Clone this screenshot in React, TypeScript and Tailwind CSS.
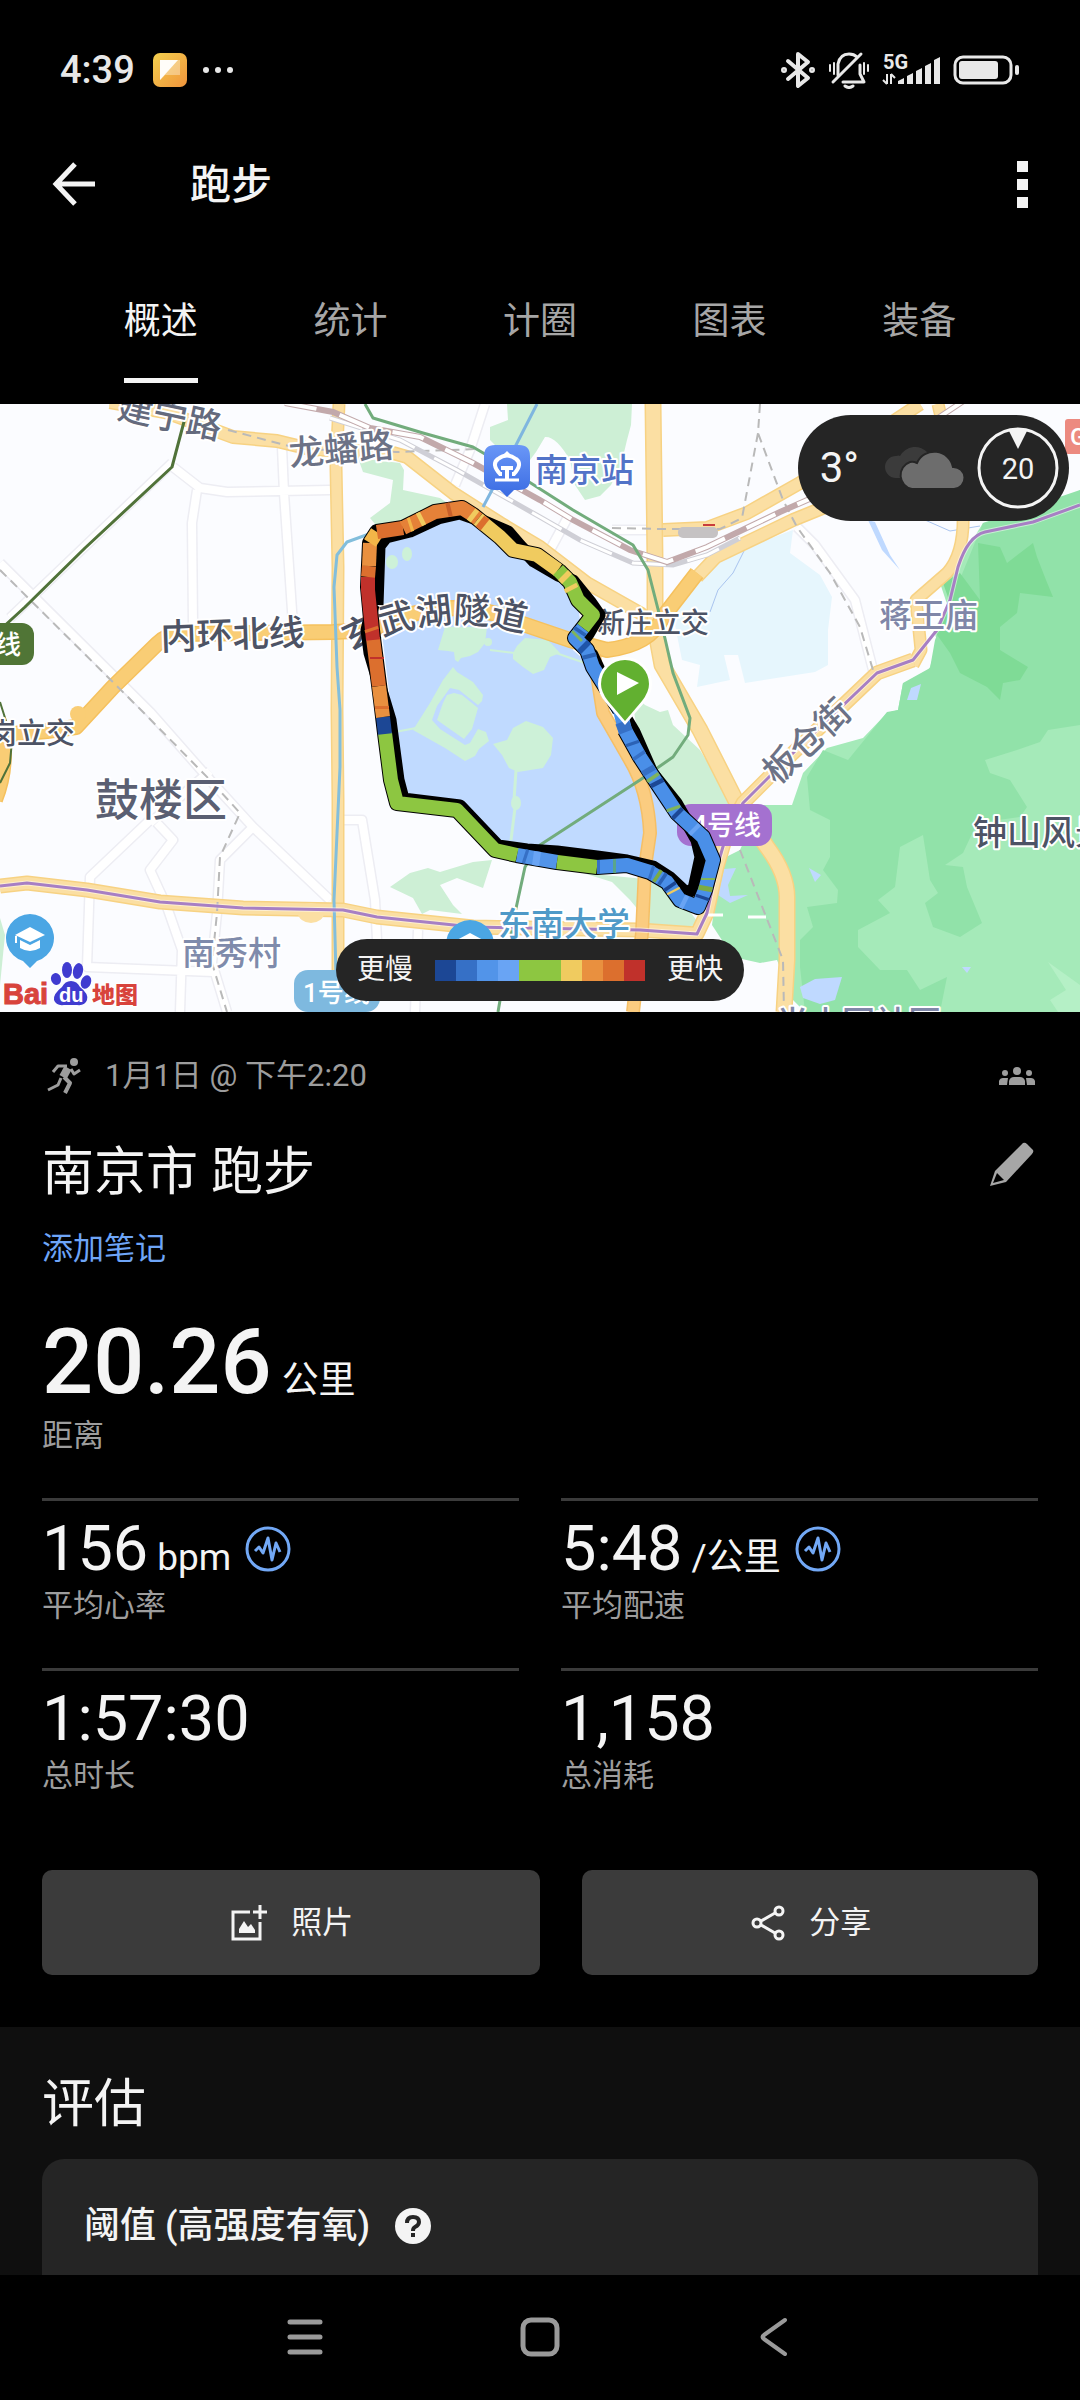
import React from "react";

const RAMP = ["#1c4795", "#3670c6", "#5294e9", "#69a4f4", "#8dc641", "#8dc641", "#f0cb5f", "#e9903f", "#dc6f2e", "#c0312b"];

const ROUTE =
  "M625 730 L640 757 L657 783 L677 813 L703 837 L713 860 L705 890 L698 907 L680 900 L667 882 L650 872 L627 865 L597 867 L557 862 L517 855 L495 850 L457 810 L397 803 L391 780 L385 733 L381 700 L372 630 L368 587 L370 543 L377 532 L403 528 L435 512 L462 508 L473 515 L500 537 L513 550 L537 555 L560 572 L570 582 L578 600 L593 615 L583 628 L575 638 L587 650 L593 667 L603 683 L620 710";

const SHADOW =
  "M377 605 L379 546 L386 537 L410 531 L438 518 L460 513 L480 520 L508 532 L520 546 L534 561 L558 575 L573 581 L590 602 L599 615 L588 634 L580 645 L592 655 L600 672 L610 692 L634 732 L652 773 L676 803 L697 840 L701 857 L694 889 L686 893 L670 878 L653 867 L627 861 L597 857 L557 852 L527 850 L498 846 L460 806 L403 799 L398 780 L390 720 L378 680 L370 653 L367 630 L373 605";

const SEGMENTS: { d: string; color: string }[] = [
  { d: "M583 628 L575 638 L587 650 L593 667 L603 683 L620 710 L625 730 L640 757 L657 783 L677 813 L703 837 L713 860 L705 890 L698 907 L680 900 L667 882 L650 872 L627 865 L597 867", color: "#4a8fe8" },
  { d: "M517 855 L557 862", color: "#5294e9" },
  { d: "M557 862 L597 867", color: "#8dc641" },
  { d: "M385 733 L391 780 L397 803 L457 810 L495 850 L517 855", color: "#8dc641" },
  { d: "M383 717 L385 734", color: "#1c4795" },
  { d: "M379 686 L383 717", color: "#e9903f" },
  { d: "M373 638 L379 686", color: "#dc6f2e" },
  { d: "M368 577 L368 590 L373 640", color: "#c0312b" },
  { d: "M369 566 L368 577", color: "#dc6f2e" },
  { d: "M370 543 L369 566", color: "#e9903f" },
  { d: "M370 543 L377 532", color: "#f3b548" },
  { d: "M377 532 L403 528", color: "#dc6f2e" },
  { d: "M403 528 L435 512 L462 508 L473 515 L478 519", color: "#e58138" },
  { d: "M478 519 L500 537 L513 550 L537 555 L558 570", color: "#f0cb5f" },
  { d: "M558 570 L570 582 L578 600 L593 615 L583 628", color: "#8dc641" },
  { d: "M371 628 L372 631", color: "#dc6f2e" },
  { d: "M377 657 L377 659", color: "#c0312b" },
  { d: "M382 706 L382 709", color: "#dc6f2e" },
  { d: "M409 525 L412 524", color: "#f3b548" },
  { d: "M419 520 L423 518", color: "#f0cb5f" },
  { d: "M447 510 L451 509", color: "#c9602a" },
  { d: "M471 514 L475 517", color: "#f0cb5f" },
  { d: "M480 521 L485 525", color: "#dc6f2e" },
  { d: "M563 575 L567 579", color: "#f0cb5f" },
  { d: "M570 586 L572 590", color: "#f0cb5f" },
  { d: "M581 630 L579 633", color: "#2b62b5" },
  { d: "M578 635 L576 637", color: "#7fb45c" },
  { d: "M582 645 L586 649", color: "#1f54a8" },
  { d: "M589 654 L590 658", color: "#2b62b5" },
  { d: "M622 722 L626 732", color: "#3670c6" },
  { d: "M632 742 L633 745", color: "#2b62b5" },
  { d: "M638 754 L640 757", color: "#3670c6" },
  { d: "M647 768 L650 773", color: "#3670c6" },
  { d: "M652 776 L654 779", color: "#7fb45c" },
  { d: "M656 781 L658 785", color: "#1c4795" },
  { d: "M673 807 L674 810", color: "#7fb45c" },
  { d: "M676 812 L679 815", color: "#1c4795" },
  { d: "M693 828 L696 831", color: "#69a4f4" },
  { d: "M708 878 L708 880", color: "#7fb45c" },
  { d: "M706 886 L705 891", color: "#7cab42" },
  { d: "M703 896 L702 899", color: "#1c4795" },
  { d: "M686 903 L682 901", color: "#69a4f4" },
  { d: "M674 892 L673 890", color: "#f0cb5f" },
  { d: "M671 888 L669 885", color: "#1c4795" },
  { d: "M664 880 L661 878", color: "#2b62b5" },
  { d: "M659 877 L656 875", color: "#7cab42" },
  { d: "M653 873 L650 872", color: "#3670c6" },
  { d: "M616 866 L613 866", color: "#5aa58c" },
  { d: "M600 867 L597 867", color: "#3670c6" },
  { d: "M540 859 L533 858", color: "#69a4f4" },
  { d: "M527 857 L524 856", color: "#3670c6" },
];

function Road({ d, w = 12, fill = "#fbdfa3", edge = "#f7d283" }: { d: string; w?: number; fill?: string; edge?: string }) {
  return (
    <g fill="none" strokeLinejoin="round" strokeLinecap="butt">
      <path d={d} stroke={edge} strokeWidth={w + 2} />
      <path d={d} stroke={fill} strokeWidth={w - 1} />
    </g>
  );
}

function Label(props: { x: number; y: number; size: number; color: string; rotate?: number; children: string }) {
  const { x, y, size, color, rotate = 0, children } = props;
  return (
    <text
      x={x}
      y={y}
      fontSize={size}
      fill={color}
      stroke="#ffffff"
      strokeWidth={4}
      strokeLinejoin="round"
      paintOrder="stroke"
      fontWeight={500}
      transform={rotate ? `rotate(${rotate} ${x} ${y})` : undefined}
    >
      {children}
    </text>
  );
}

function SchoolPin({ x, y }: { x: number; y: number }) {
  return (
    <g transform={`translate(${x} ${y})`}>
      <path d="M0 29 L-7 22 A24 24 0 1 1 7 22 Z" fill="#4ba6e4" />
      <path d="M0 -12 L15 -4 L0 3 L-15 -4 Z" fill="#fff" />
      <path d="M-10 1 L0 6 L10 1 V9 Q0 15 -10 9 Z" fill="#fff" />
      <path d="M-14 -3 V4" stroke="#fff" strokeWidth="2" />
    </g>
  );
}

function MapDrawing() {
  const minor =
    "M173 467 L200 488 L227 492 L330 490 M197 490 L192 523 L193 625 M282 447 L284 493 L293 625 M0 563 L150 712 L210 780 L253 827 L330 900 M10 618 L172 463 M150 820 L90 877 L87 967 L213 972 M157 823 L173 840 L150 870 L167 907 L182 950 L180 1012 M343 820 L362 820 L375 900 L377 940 M210 771 L150 823 M253 827 L220 860 L217 913 L212 963 L227 1012 M485 404 L470 450 L455 485 M568 517 L550 550 M612 530 L655 530 M797 527 L815 545 L855 600 L873 670 M418 930 L415 1012";
  const dashed = "M0 570 L143 712 L210 780 L240 813 L220 857 L217 913 L212 963 L227 1012 M228 430 L300 449 L397 452 L476 449 M612 528 L663 529 L720 529 L742 518 L758 433 M760 404 L758 433 L783 500 L797 527 L830 573 L860 627 L873 670";
  const rail = "M285 403 L333 412 L370 428 L420 437 L473 463 L540 500 L573 520 L630 550 L667 562 L707 547 L780 512 L830 490 L965 400";
  const rail2 = "M330 418 L400 440 L457 470 L540 517 L580 540 L633 563 L673 565 L707 555 L740 538";
  const line4 =
    "M0 886 L27 883 L87 890 L160 902 L243 908 L343 910 L377 917 L473 927 L527 928 L640 930 L697 934 L707 913 L717 867 L727 833 L743 803 L793 753 L877 673 L913 660";
  const line4North = " L937 630 L950 600 L958 567 Q968 536 985 532 L1033 522 L1080 505";
  const line3 =
    "M365 404 L373 418 L423 433 L473 447 L490 457 L573 510 L633 545 L648 570 L660 617 L673 673 L690 718 L688 735 L673 757 L640 780 L540 845 L525 867 L515 913 L498 1012";
  return (
    <svg
      viewBox="0 404 1080 608"
      className="block h-auto w-full"
      role="img"
      aria-label="跑步路线地图"
      fontFamily='Roboto, "Noto Sans CJK SC", sans-serif'
    >
      <rect x="0" y="404" width="1080" height="608" fill="#fbfcff" />

      {/* parks */}
      <g fill="#cdefd5">
        <path d="M507 404 L632 404 L631 425 L627 440 L621 465 L611 485 L600 496 L585 500 L575 485 L570 460 Q556 436 545 437 L536 452 L530 460 L500 450 L490 440 L490 427 L508 420 Z" />
        <path d="M358 458 L400 463 L404 470 L403 490 L440 498 L450 505 L380 530 L370 518 L390 503 L393 480 L363 472 Z" />
        <path d="M390 887 L410 873 L428 868 L440 872 L473 862 L492 860 L483 888 L457 878 L440 885 L453 905 L462 914 L430 910 L422 914 L413 898 Z" />
        <path d="M583 873 L655 880 L685 905 L700 925 L655 930 L630 900 L612 882 Z" />
        <path d="M630 690 L645 705 L660 712 L668 710 L673 725 L700 750 L733 803 L700 830 L675 805 L640 745 Z" />
        <path d="M0 918 L5 935 L0 985 Z" />
      </g>
      <path d="M793 530 L790 553 L820 575 L832 597 L828 630 L828 665 L815 672 L745 683 L738 655 L724 655 L730 680 L697 687 L700 665 L682 660 L672 610 L690 575 L725 555 Z" fill="#e6f6fd" />

      {/* Purple Mountain */}
      <path d="M1080 490 L1050 512 L983 523 L960 560 L940 583 L948 607 L933 630 L938 642 L930 667 L920 683 L903 683 L898 710 L887 713 L863 738 L827 748 L803 773 L792 805 L760 805 L740 850 L720 860 L712 925 L733 957 L760 963 L777 960 L793 1000 L805 1012 L1080 1012 Z" fill="#a5eab9" />
      <path d="M807 777 L823 750 L848 760 L887 712 L898 710 L903 683 L930 668 L935 640 L983 523 L1080 490 L1080 725 L1048 730 L1040 742 L1017 750 L985 760 L990 773 L1010 780 L1027 807 L1020 817 L977 823 L963 853 L945 865 L963 867 L967 887 L982 923 L960 937 L933 927 L925 903 L938 893 L930 880 L923 835 L900 847 L895 887 L878 900 L890 913 L858 930 L858 947 L880 970 L907 970 L920 990 L947 977 L940 1012 L805 1012 L800 967 L800 940 L813 927 L807 907 L837 903 L838 890 L823 870 L830 857 L830 820 L810 810 Z" fill="#91e2a9" />
      <path d="M978 543 L1000 547 L1007 563 L1033 543 L1037 557 L1046 580 L1053 597 L1020 593 L1017 613 L1000 627 L1000 650 L1028 667 L1020 680 L1003 683 L1000 700 L987 687 L960 673 L950 653 L935 632 L950 603 L943 583 L960 573 L980 600 Z" fill="#7fdb96" />
      <path d="M1048 962 L1080 985 V1012 H1058 L1050 1000 L1066 990 Z" fill="#b5f0c6" />
      <g fill="#bfd9ff">
        <path d="M800 987 L815 979 L842 977 L835 1000 L820 1004 L803 998 Z" />
        <path d="M809 868 L821 875 L815 882 Z" />
        <path d="M911 688 L921 684 L917 700 L907 700 Z" />
        <path d="M724 869 L736 868 L728 885 L730 896 L748 895 L730 903 L718 895 Z" />
        <path d="M962 967 L971 967 L967 973 Z" />
        <path d="M868 520 L875 522 L890 555 L900 570 L882 550 Z" />
      </g>
      <path d="M745 549 L733 573 L718 590 L710 612 M925 520 L950 531 L980 526" stroke="#a9c4ef" strokeWidth="1" fill="none" />

      {/* Xuanwu lake */}
      <path d="M380 545 L405 537 L455 518 L475 525 L500 545 L533 565 L560 583 L578 605 L580 620 L570 632 L573 650 L590 665 L598 690 L625 740 L660 795 L690 840 L698 855 L692 892 L655 868 L600 855 L520 848 L497 842 L462 805 L403 798 L390 700 L378 600 Z" fill="#c0daff" />
      <g fill="#cdf1d8">
        <path d="M438 650 L445 627 L487 627 L485 643 L478 652 L470 656 L461 658 L458 662 L455 660 L454 652 L448 651 Z" />
        <circle cx="488" cy="642" r="4" />
        <path d="M513 653 L517 646 L525 638 L548 640 L560 653 L550 657 L544 670 L533 674 L523 667 L513 659 Z" />
        <path d="M493 744 L507 740 L513 728 L526 721 L543 727 L553 738 L551 755 L543 768 L518 772 L509 768 L502 755 Z" />
        <path d="M453 667 L457 672 L473 682 L483 695 L482 701 L478 705 L459 690 L450 688 L437 706 L432 720 L440 729 L465 745 L470 743 L478 729 L486 732 L489 741 L479 749 L475 756 L465 761 L445 748 L413 730 L430 703 L443 680 Z" />
        <path d="M447 695 L454 693 L462 695 L478 708 L472 729 L464 739 L437 720 L443 703 Z" />
        <path d="M516 770 L514 800 L515 808 L511 840" stroke="#cdf1d8" strokeWidth="3" fill="none" />
        <path d="M395 732 L416 728 M490 650 L515 653 M556 653 L585 663" stroke="#cdf1d8" strokeWidth="2" fill="none" />
        <ellipse cx="516" cy="803" rx="5" ry="7" />
        <ellipse cx="392" cy="562" rx="6" ry="7" />
        <ellipse cx="407" cy="554" rx="5" ry="7" />
      </g>

      {/* streets */}
      <path d={minor} fill="none" stroke="#ededf3" strokeWidth="11" strokeLinejoin="round" />
      <path d={minor} fill="none" stroke="#ffffff" strokeWidth="8" strokeLinejoin="round" />
      <Road d="M110 402 L165 412 L233 437 L277 441 L310 449 L393 453 L407 457 L453 493 L500 523 L540 547 L587 583 L640 613 L655 625" />
      <Road d="M339 404 L336 467 L338 567 L337 710 L338 800 L338 1012" w={11} />
      <Road d="M653 404 L655 560 L655 627 L662 665 L700 730 L737 803 L767 847 Q788 875 787 900 L787 960 L784 1012" w={15} />
      <Road d="M663 530 L707 528 L747 513 L800 483 L920 404" w={12} />
      <Road d="M697 577 L716 557 L793 520 L830 505" w={12} />
      <Road d="M913 665 L921 650 L916 600 L947 573 Q965 553 963 510 L938 404" w={11} />
      <Road d={line4} w={13} />
      <Road d="M0 735 L47 731 L76 727 L113 687 L157 644 Q167 634 180 634 L333 632 L372 630 Q450 590 520 623 L570 640 L607 650 Q650 645 663 617 L697 573" w={14} fill="#f9cd75" edge="#f5c15e" />
      <Road d="M4 735 Q8 770 -4 800" w={12} fill="#f9cd75" edge="#f5c15e" />
      <Road d="M594 655 L603 713 L630 760 Q648 790 650 833 L645 867 L642 933 L633 1012" w={12} fill="#fbcc80" edge="#f5bf66" />
      <circle cx="78" cy="714" r="8" fill="#f9cd75" />
      <ellipse cx="311" cy="913" rx="13" ry="10" fill="#fbdfa3" />
      <path d={dashed} fill="none" stroke="#b9b9b9" strokeWidth="2" strokeDasharray="9 6" />
      <path d="M740 850 L783 960 L784 1012" fill="none" stroke="#b9b9b9" strokeWidth="2" strokeDasharray="9 6" />
      <path d="M708 915 H723 M748 917 H766" stroke="#fff" strokeWidth="3" />

      {/* railways */}
      <path d={rail2} fill="none" stroke="#cfcfd6" strokeWidth="5" />
      <path d={rail2} fill="none" stroke="#ffffff" strokeWidth="3" strokeDasharray="34 22" />
      <path d={rail} fill="none" stroke="#c2a9ab" strokeWidth="6" />
      <path d={rail} fill="none" stroke="#ffffff" strokeWidth="4" strokeDasharray="32 24" />
      <rect x="678" y="527" width="40" height="11" rx="5" fill="#c5c2c3" />
      <path d="M703 525 H715" stroke="#c93c3c" strokeWidth="2" />

      {/* metro lines */}
      <g fill="none" strokeLinejoin="round">
        <path d="M185 418 L172 467 L85 548 L25 607 L0 630" stroke="#507239" strokeWidth="3" />
        <path d="M0 702 L12 740 L10 763 L0 783" stroke="#507239" strokeWidth="2" />
        <path d={line3} stroke="#72ac7c" strokeWidth="3" />
        <path d="M369 534 L347 542 L337 555 L334 587 L337 667 L340 710 L340 767 L334 900 L337 1012" stroke="#82bedc" strokeWidth="3" />
        <path d="M537 404 L515 447 L483 507" stroke="#7fb6df" strokeWidth="3" />
        <path d={line4 + line4North} stroke="#ffffff" strokeOpacity="0.5" strokeWidth="5" />
        <path d={line4 + line4North} stroke="#a77fc4" strokeWidth="3" />
      </g>

      {/* place names */}
      <Label x={116} y={418} size={35} color="#646a7d" rotate={12}>建宁路</Label>
      <Label x={290} y={466} size={35} color="#6c7286" rotate={-5}>龙蟠路</Label>
      <Label x={161} y={650} size={36} color="#4d5365" rotate={-2}>内环北线</Label>
      <Label x={535} y={482} size={33} color="#5273c8">南京站</Label>
      <Label x={597} y={633} size={28} color="#4d5365">新庄立交</Label>
      <Label x={879} y={627} size={33} color="#8087a8">蒋王庙</Label>
      <Label x={777} y={786} size={35} color="#6c7286" rotate={-43}>板仓街</Label>
      <Label x={973} y={845} size={34} color="#4d5365">钟山风景</Label>
      <Label x={95} y={816} size={44} color="#5a5f72">鼓楼区</Label>
      <Label x={182} y={965} size={33} color="#7f8bab">南秀村</Label>
      <Label x={-12} y={744} size={29} color="#4d5365">岗立交</Label>
      <Label x={498} y={936} size={33} color="#4f9ac8">东南大学</Label>
      <Label x={776} y={1035} size={33} color="#8087a8">半山园社区</Label>
      <path id="tunnel" d="M350 652 Q440 602 540 638" fill="none" />
      <text fontSize="36" fontWeight="500" fill="#4d5365" stroke="#ffffff" strokeWidth="4" strokeLinejoin="round" paintOrder="stroke">
        <textPath href="#tunnel">玄武湖隧道</textPath>
      </text>

      {/* line badges */}
      <g fill="#ffffff" fontWeight="500">
        <rect x="-20" y="623" width="54" height="42" rx="12" fill="#507536" />
        <text x="21" y="654" fontSize="26" textAnchor="end">线</text>
        <rect x="677" y="804" width="95" height="42" rx="14" fill="#a471d0" />
        <text x="761" y="835" fontSize="27" textAnchor="end">4号线</text>
        <rect x="294" y="970" width="86" height="42" rx="14" fill="#7eb9df" />
        <text x="303" y="1002" fontSize="26">1号线</text>
        <rect x="1065" y="419" width="40" height="35" rx="3" fill="#ec8a80" />
        <text x="1070" y="445" fontSize="24">G</text>
      </g>

      {/* railway station */}
      <defs>
        <linearGradient id="station" x1="0" y1="0" x2="0" y2="1">
          <stop offset="0" stopColor="#6a97f7" />
          <stop offset="1" stopColor="#3a6be2" />
        </linearGradient>
      </defs>
      <path d="M495 445 H519 Q530 445 530 456 V480 Q530 490 519 490 H514 L507 497 L500 490 H495 Q484 490 484 480 V456 Q484 445 495 445 Z" fill="url(#station)" />
      <g fill="none" stroke="#fff" strokeWidth="4">
        <path d="M502 474 H500 Q491 464 498 459 Q507 452 516 459 Q523 464 514 474 H512" />
        <path d="M495 480 H519" strokeWidth="3" />
        <path d="M507 468 V480 M501 468 H513" />
      </g>
      <path d="M502 456 L507 451 L512 456 Z" fill="#fff" />

      <SchoolPin x={30} y={939} />
      <SchoolPin x={470} y={945} />

      {/* map provider */}
      <g fill="#3f3bd0">
        <ellipse cx="56" cy="979" rx="5" ry="6" transform="rotate(-15 56 979)" />
        <ellipse cx="67" cy="970" rx="5" ry="8" />
        <ellipse cx="78" cy="971" rx="5" ry="8" transform="rotate(12 78 971)" />
        <ellipse cx="86" cy="982" rx="5" ry="7" transform="rotate(20 86 982)" />
        <path d="M71 981 Q77 981 80 987 Q89 994 87 1000 Q85 1006 77 1005 H64 Q56 1006 54 1000 Q53 994 62 987 Q65 981 71 981 Z" />
      </g>
      <text x="3" y="1004" fontSize="29" fontWeight="700" fill="#d8433c" stroke="#d8433c" strokeWidth="1" fontFamily='"Liberation Sans", sans-serif'>Bai</text>
      <text x="59" y="1002" fontSize="20" fontWeight="700" fill="#fff" fontFamily='"Liberation Sans", sans-serif'>du</text>
      <text x="92" y="1003" fontSize="23" fontWeight="800" fill="#d8433c" stroke="#fff" strokeWidth="2" paintOrder="stroke">地图</text>

      {/* recorded route */}
      <g fill="none" strokeLinejoin="round">
        <path d={SHADOW} stroke="#000" strokeWidth="13" />
        <path d={ROUTE} stroke="#000" strokeWidth="16" />
        {SEGMENTS.map((s) => (
          <path key={s.d} d={s.d} stroke={s.color} strokeWidth="14" />
        ))}
      </g>

      {/* start marker */}
      <path d="M625 725 L606 703 Q598 694 598 684 A27 27 0 1 1 652 684 Q652 694 644 703 Z" fill="#fff" />
      <path d="M625 721 L608 701 Q601 692 601 684 A24 24 0 1 1 649 684 Q649 692 642 701 Z" fill="#62b030" />
      <path d="M617 672 L639 683 L617 695 Z" fill="#fff" />
    </svg>
  );
}

function StatusBar() {
  return (
    <div className="flex h-[140px] items-center justify-between px-[60px] text-[#e8e8e8]">
      <div className="flex items-center">
        <span className="text-[38px] leading-[44px] font-medium">4:39</span>
        <svg viewBox="0 0 34 34" className="ml-[18px] size-[34px]" aria-hidden="true">
          <defs>
            <linearGradient id="note" x1="0" y1="0" x2="1" y2="1">
              <stop offset="0" stopColor="#f4d04e" />
              <stop offset="1" stopColor="#f0943c" />
            </linearGradient>
          </defs>
          <rect width="34" height="34" rx="7" fill="url(#note)" />
          <path d="M7 7 H27 V22 H12 L7 27 Z" fill="#fff" fillOpacity="0.35" />
          <path d="M7 7 H25 L7 27 Z" fill="#fff" fillOpacity="0.95" />
        </svg>
        <svg viewBox="0 0 32 8" className="ml-[15px] h-2 w-8" fill="currentColor" aria-hidden="true">
          <circle cx="4" cy="4" r="3" />
          <circle cx="16" cy="4" r="3" />
          <circle cx="28" cy="4" r="3" />
        </svg>
      </div>
      <div className="flex items-center">
        <svg viewBox="0 0 34 38" className="h-[38px] w-[34px]" fill="none" stroke="currentColor" strokeWidth="4" strokeLinejoin="round" strokeLinecap="round" aria-hidden="true">
          <path d="M7 10 L27 27 L17 35 V3 L27 11 L7 28" />
          <circle cx="3" cy="19" r="1" fill="currentColor" />
          <circle cx="31" cy="19" r="1" fill="currentColor" />
        </svg>
        <svg viewBox="0 0 42 38" className="ml-[13px] h-[38px] w-[42px]" fill="none" stroke="currentColor" strokeWidth="3" strokeLinecap="round" strokeLinejoin="round" aria-hidden="true">
          <path d="M10 24 V13 Q12 3 21 3 Q26 3 29 6" />
          <path d="M32 14 V23 L36 31 H15" />
          <path d="M5 31 L33 3" />
          <path d="M17 35 Q21 38 25 35" />
          <path d="M2 14 V20 M6 12 V23 M36 12 V23 M40 14 V20" strokeWidth="2" />
        </svg>
        <svg viewBox="0 0 60 34" className="ml-[12px] h-[34px] w-[60px]" fill="currentColor" aria-hidden="true">
          <text x="1" y="16" fontSize="20" fontWeight="700" fontFamily="Roboto, sans-serif">5G</text>
          <path d="M5 21 V31 M5 31 L1 27 M9 31 V21 M9 21 L13 25" stroke="currentColor" strokeWidth="2" fill="none" />
          <path d="M16 31 V28 L22 25 V31 Z M25 31 V23 L31 20 V31 Z M34 31 V18 L40 15 V31 Z M43 31 V13 L49 10 V31 Z M52 31 V7 L58 4 V31 Z" />
        </svg>
        <svg viewBox="0 0 67 30" className="ml-[11px] h-[30px] w-[67px]" aria-hidden="true">
          <rect x="2" y="2" width="56" height="26" rx="8" fill="none" stroke="currentColor" strokeWidth="3" />
          <rect x="6" y="6" width="39" height="18" rx="3" fill="currentColor" />
          <rect x="62" y="10" width="4" height="10" rx="2" fill="currentColor" />
        </svg>
      </div>
    </div>
  );
}

function PulseButton() {
  return (
    <button type="button" aria-label="查看图表" className="ml-[14px] self-center text-[#72a8f5]">
      <svg viewBox="0 0 46 46" className="size-[46px]" fill="none" stroke="currentColor" strokeLinejoin="round" aria-hidden="true">
        <circle cx="23" cy="23" r="21" strokeWidth="3" />
        <path d="M10 25 L14 21 L18 27 L23 12 L27 34 L31 17 L35 26" strokeWidth="3" />
      </svg>
    </button>
  );
}

function Metric(props: { value: string; unit?: string; label: string; chart?: boolean }) {
  return (
    <div className="border-t-[3px] border-[#3b3b3b] pt-[12px] pb-[42px]">
      <div className="flex h-[72px] items-baseline">
        <span className="text-[63px] leading-[72px]">{props.value}</span>
        {props.unit && <span className="ml-[9px] text-[37px] leading-[48px]">{props.unit}</span>}
        {props.chart && <PulseButton />}
      </div>
      <p className="mt-px text-[31px] leading-[40px] text-[#9d9d9d]">{props.label}</p>
    </div>
  );
}

const TABS = ["概述", "统计", "计圈", "图表", "装备"];

export default function App() {
  return (
    <div className='flex min-h-screen flex-col overflow-hidden bg-black font-[Roboto,"Noto_Sans_CJK_SC",sans-serif] text-[#f4f4f4]' lang="zh-CN">
      <StatusBar />

      <header className="flex h-[88px] items-center pr-[48px] pl-[52px]">
        <button type="button" aria-label="返回">
          <svg viewBox="0 0 44 44" className="size-[44px]" fill="none" stroke="currentColor" strokeWidth="5" aria-hidden="true">
            <path d="M43 22 H4 M23 2 L4 22 L23 42" />
          </svg>
        </button>
        <h1 className="ml-[94px] flex-1 pt-[2px] text-[41px] leading-[56px] font-medium">跑步</h1>
        <button type="button" aria-label="更多选项" className="flex flex-col gap-[7px] p-1">
          <span className="size-[11px] bg-current" />
          <span className="size-[11px] bg-current" />
          <span className="size-[11px] bg-current" />
        </button>
      </header>

      <nav className="flex px-[66px] pt-[70px] pb-[21px]" role="tablist">
        {TABS.map((tab, i) => (
          <button key={tab} type="button" role="tab" aria-selected={i === 0} className="flex flex-1 justify-center">
            <span
              className={
                i === 0
                  ? "border-b-[5px] border-[#f4f4f4] pb-[32px] text-[37px] leading-[48px]"
                  : "border-b-[5px] border-transparent pb-[32px] text-[37px] leading-[48px] text-[#a6a6a6]"
              }
            >
              {tab}
            </span>
          </button>
        ))}
      </nav>

      <section className="relative overflow-hidden">
        <MapDrawing />
        <div className="absolute top-[11px] right-[11px] flex h-[106px] items-center rounded-full bg-[#252525] pr-[9px] pl-[22px]">
          <span className="text-[42px] leading-[48px]">3°</span>
          <svg viewBox="0 0 84 50" className="ml-[23px] h-[50px] w-[84px]" aria-hidden="true">
            <path d="M14 35 A11 11 0 0 1 14 13 Q17 12 18 13 A17 17 0 0 1 46 10 L40 35 Z" fill="#3b3b3b" />
            <path
              d="M30 46 A14 14 0 0 1 28 19 Q31 18 35 20 A19 19 0 0 1 71 24 A11 11 0 0 1 72 46 Z"
              fill="#6d6d6d"
              stroke="#252525"
              strokeWidth="2"
            />
          </svg>
          <svg viewBox="0 0 84 84" className="ml-[10px] size-[84px]" aria-hidden="true">
            <circle cx="42" cy="42" r="39" fill="none" stroke="#f4f4f4" strokeWidth="3" />
            <path d="M32 3 H52 L42 23 Z" fill="#f4f4f4" />
            <text x="42" y="53" fontSize="29" textAnchor="middle" fill="#f4f4f4" fontFamily="Roboto, sans-serif">20</text>
          </svg>
        </div>
        <div className="absolute inset-x-0 bottom-[11px] flex justify-center">
          <div className="flex h-[62px] items-center gap-[22px] rounded-full bg-[#252525] px-[21px] text-[28px] leading-[40px]">
            <span>更慢</span>
            <div className="flex h-[21px]">
              {RAMP.map((color, i) => (
                <span key={i} className="w-[21px]" style={{ backgroundColor: color }} />
              ))}
            </div>
            <span>更快</span>
          </div>
        </div>
      </section>

      <main className="px-[42px] pt-[41px] pb-[52px]">
        <div className="flex h-[46px] items-center text-[#9d9d9d]">
          <svg viewBox="0 0 34 36" className="ml-[5px] h-9 w-[34px]" fill="none" stroke="currentColor" strokeLinejoin="round" aria-hidden="true">
            <circle cx="27" cy="4" r="4" fill="currentColor" stroke="none" />
            <path d="M21 10 L16 19" strokeWidth="8" />
            <path d="M20 8 L11 8 L6 14" strokeWidth="3" />
            <path d="M24 11 L27 16 L33 12" strokeWidth="3" />
            <path d="M17 19 L23 25 L18 35" strokeWidth="4" />
            <path d="M14 20 L11 27 L1 32" strokeWidth="3" />
          </svg>
          <time className="ml-[24px] flex-1 text-[31px] leading-[46px]">1月1日 @ 下午2:20</time>
          <svg viewBox="0 0 36 20" className="mr-[3px] h-5 w-9" fill="currentColor" aria-label="好友可见" role="img">
            <circle cx="18" cy="5" r="4" />
            <circle cx="6" cy="7" r="3" />
            <circle cx="30" cy="7" r="3" />
            <path d="M10 19 V15 Q11 11 15 11 H21 Q25 11 26 15 V19 Z" />
            <path d="M0 19 V15 Q1 12 4 12 H9 L8 19 Z M36 19 V15 Q35 12 32 12 H27 L28 19 Z" />
          </svg>
        </div>

        <div className="mt-[38px] flex items-start">
          <h2 className="flex-1 text-[52px] leading-[72px]">南京市 跑步</h2>
          <button type="button" aria-label="编辑名称" className="mt-[5px] mr-[4px]">
            <svg viewBox="0 0 45 45" className="size-[45px]" aria-hidden="true">
              <path d="M1 44 L6 29 L34 1 Q36 0 38 2 L44 8 Q45 10 43 12 L17 40 Z" fill="#a6a6a6" />
              <path d="M4 41 L8 31 L15 38 Z" fill="#000" />
            </svg>
          </button>
        </div>
        <a href="#notes" className="mt-[17px] block w-fit text-[31px] leading-[46px] text-[#6ea5f7]">
          添加笔记
        </a>

        <div className="mt-[41px] flex h-[100px] items-baseline">
          <span className="text-[90px] leading-[100px] font-medium">20.26</span>
          <span className="ml-[10px] text-[37px] leading-[48px]">公里</span>
        </div>
        <p className="text-[31px] leading-[46px] text-[#9d9d9d]">距离</p>

        <div className="mt-[39px] grid grid-cols-2 gap-x-[42px]">
          <Metric value="156" unit="bpm" label="平均心率" chart />
          <Metric value="5:48" unit="/公里" label="平均配速" chart />
          <Metric value="1:57:30" label="总时长" />
          <Metric value="1,158" label="总消耗" />
        </div>

        <div className="mt-[32px] flex gap-[42px] text-[31px] leading-[46px]">
          <button type="button" className="flex h-[105px] flex-[12] items-center justify-center gap-[24px] rounded-[10px] bg-[#3b3b3b] pl-[3px]">
            <svg viewBox="0 0 36 36" className="size-9" fill="none" stroke="currentColor" strokeWidth="3" aria-hidden="true">
              <path d="M19 7 H2 V34 H29 V17" />
              <path d="M29 0 V14 M22 7 H36" />
              <path d="M8 28 V24 L13 16 L17 22 L20 19 L24 25 V28 Z" fill="currentColor" stroke="none" />
            </svg>
            照片
          </button>
          <button type="button" className="flex h-[105px] flex-[11] items-center justify-center gap-[24px] rounded-[10px] bg-[#3b3b3b] pl-[3px]">
            <svg viewBox="0 0 34 36" className="h-9 w-[34px]" fill="none" stroke="currentColor" strokeWidth="3" aria-hidden="true">
              <path d="M10 16 L24 8 M10 20 L24 28" />
              <circle cx="6" cy="18" r="4" />
              <circle cx="28" cy="6" r="4" />
              <circle cx="28" cy="30" r="4" />
            </svg>
            分享
          </button>
        </div>
      </main>

      <section className="bg-[#0f0f0f] px-[42px] pt-[42px]">
        <h2 className="text-[52px] leading-[72px]">评估</h2>
        <div className="mt-[18px] flex items-center rounded-t-[22px] bg-[#252525] px-[42px] pt-[43px] pb-[25px]">
          <h3 className="text-[36px] leading-[48px] font-medium">阈值 (高强度有氧)</h3>
          <button type="button" aria-label="帮助" className="ml-[25px]">
            <svg viewBox="0 0 36 36" className="size-9" aria-hidden="true">
              <circle cx="18" cy="18" r="18" fill="#f4f4f4" />
              <path d="M12 15 Q12 9 18 9 Q24 9 24 14 Q24 17 20 19 Q18 20 18 23" fill="none" stroke="#252525" strokeWidth="4" />
              <rect x="16" y="25" width="4" height="4" fill="#252525" />
            </svg>
          </button>
        </div>
      </section>

      <footer className="flex h-[124px] items-center justify-between px-[286px] text-[#9a9a9a]">
        <button type="button" aria-label="最近任务">
          <svg viewBox="0 0 38 40" className="h-10 w-[38px]" stroke="currentColor" strokeWidth="5" strokeLinecap="round" aria-hidden="true">
            <path d="M4 5 H34 M4 20 H34 M4 35 H34" />
          </svg>
        </button>
        <button type="button" aria-label="主页">
          <svg viewBox="0 0 40 40" className="size-10" fill="none" stroke="currentColor" strokeWidth="5" aria-hidden="true">
            <rect x="3" y="3" width="34" height="34" rx="8" />
          </svg>
        </button>
        <button type="button" aria-label="返回上一页">
          <svg viewBox="0 0 38 40" className="h-10 w-[38px]" fill="none" stroke="currentColor" strokeWidth="4" strokeLinecap="round" strokeLinejoin="round" aria-hidden="true">
            <path d="M29 3 L8 18 Q5 20 8 22 L29 37" />
          </svg>
        </button>
      </footer>
    </div>
  );
}
